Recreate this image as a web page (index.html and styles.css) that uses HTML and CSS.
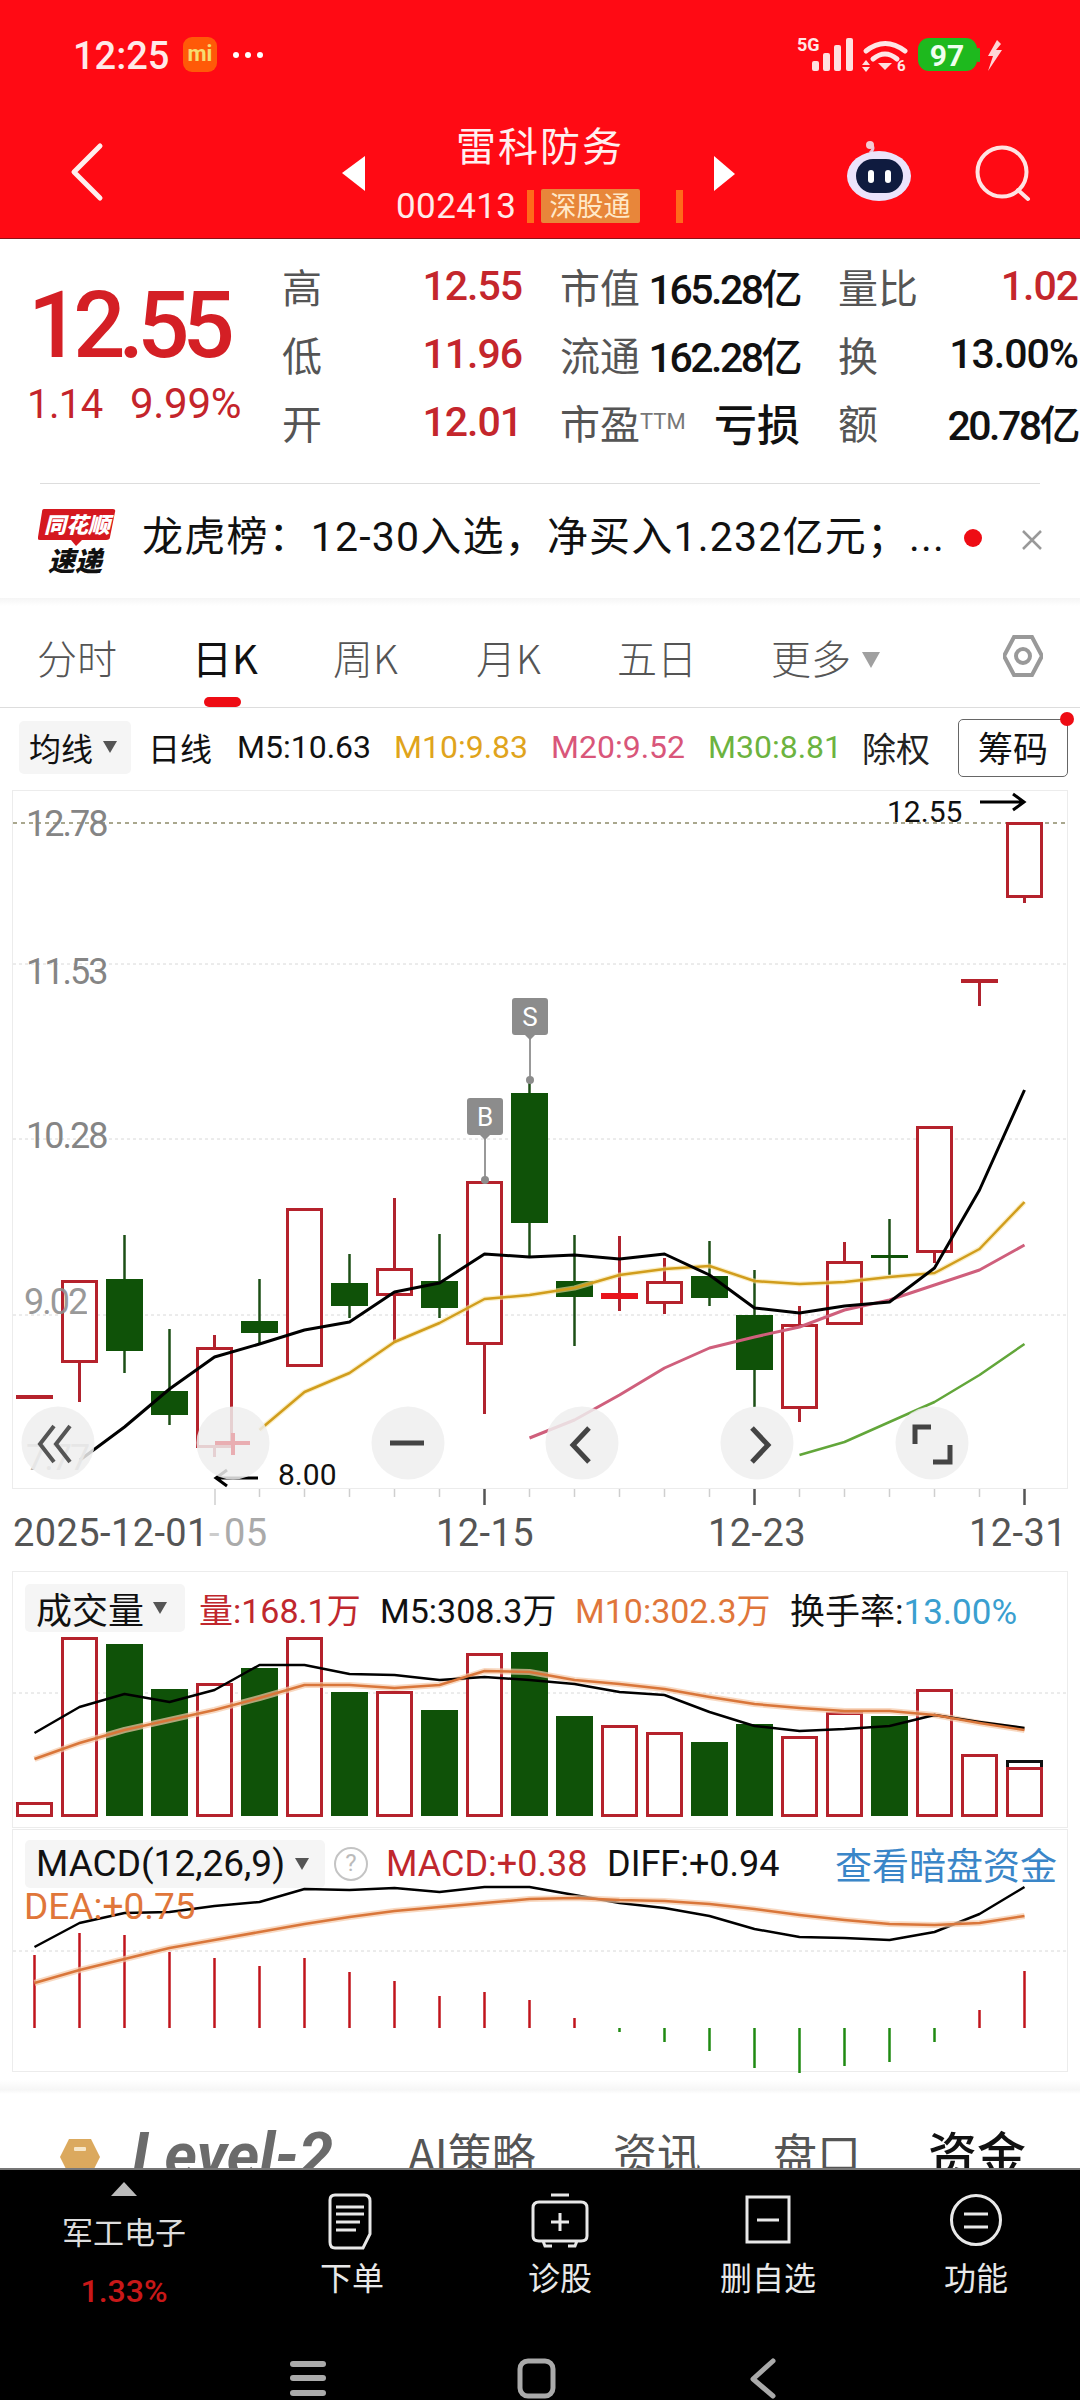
FILE: index.html
```html
<!DOCTYPE html>
<html lang="zh">
<head>
<meta charset="utf-8">
<title>雷科防务</title>
<link rel="stylesheet" href="styles.css">
</head>
<body>
<div class="screen">
  <header class="header">
    <svg class="header-art" viewBox="0 0 1080 238" width="1080" height="238">
      <text class="st-time" x="73" y="69">12:25</text>
      <rect class="mi-bg" x="183" y="37" width="34" height="35" rx="9"/>
      <text class="mi-text" x="200" y="61">mi</text>
      <circle class="wh" cx="236" cy="55" r="3"/><circle class="wh" cx="248" cy="55" r="3"/><circle class="wh" cx="260" cy="55" r="3"/>
      <text class="st-5g" x="797" y="51">5G</text>
      <g class="soft-wh">
        <rect x="812" y="61" width="7" height="10" rx="2"/><rect x="823" y="53" width="7" height="18" rx="2"/><rect x="834" y="45" width="7" height="26" rx="2"/><rect x="846" y="38" width="7" height="33" rx="2"/>
        <path d="M878 63 L892 63 L885 70 Z"/>
        <path d="M862 65 L866 60 L870 65 Z"/><path d="M862 67 L866 72 L870 67 Z"/>
      </g>
      <path class="wifi" d="M866 51 Q885 36 905 51"/>
      <path class="wifi" d="M873 59 Q885 49 897 59"/>
      <text class="st-6" x="897" y="71">6</text>
      <rect class="bat" x="918" y="38" width="59" height="33" rx="11"/>
      <rect class="bat" x="977" y="48" width="3" height="14" rx="1"/>
      <text class="bat-text" x="947" y="66">97</text>
      <path class="soft-wh-f" d="M997 40 L988 56 L993 56 L988 71 L1002 50 L996 50 L1001 44 Z"/>
      <path class="back" d="M100 146 L74 172 L100 198"/>
      <path class="wh" d="M365 156 L342 173 L365 191 Z"/>
      <path class="wh" d="M714 156 L735 174 L714 191 Z"/>
      <text class="title" x="540" y="161">雷科防务</text>
      <text class="code" x="396" y="218">002413</text>
      <rect class="tag-bar" x="527" y="190" width="7" height="33"/>
      <rect class="tag-bg" x="541" y="189" width="99" height="34" rx="2"/>
      <text class="tag-text" x="590" y="216">深股通</text>
      <rect class="tag-bar" x="676" y="190" width="7" height="33"/>
      <path class="ant" d="M870 153 Q876 147 870 145"/>
      <circle class="ant-dot" cx="870" cy="145" r="4"/>
      <ellipse class="bot-head" cx="879" cy="176" rx="32" ry="25"/>
      <rect class="bot-face" x="856" y="159" width="47" height="34" rx="17"/>
      <rect class="wh" x="868" y="170" width="6" height="13" rx="3"/><rect class="wh" x="885" y="170" width="6" height="13" rx="3"/>
      <circle class="search" cx="1002" cy="172" r="24.5"/>
      <path class="search" d="M1018 190 L1028 199"/>
    </svg>
  </header>

  <section class="quote">
    <div class="price">
      <div class="price-main">12.55</div>
      <div class="price-sub"><span class="sub-a">1.14</span><span class="sub-b">9.99%</span></div>
    </div>
    <div class="stats">
      <div class="cell"><span class="lbl">高</span><span class="val up-text">12.55</span></div>
      <div class="cell"><span class="lbl">市值</span><span class="val val-y">165.28亿</span></div>
      <div class="cell"><span class="lbl">量比</span><span class="val up-text">1.02</span></div>
      <div class="cell"><span class="lbl">低</span><span class="val up-text">11.96</span></div>
      <div class="cell"><span class="lbl">流通</span><span class="val val-y">162.28亿</span></div>
      <div class="cell"><span class="lbl">换</span><span class="val">13.00%</span></div>
      <div class="cell"><span class="lbl">开</span><span class="val up-text">12.01</span></div>
      <div class="cell"><span class="lbl">市盈<sup class="ttm">TTM</sup></span><span class="val val-cn">亏损</span></div>
      <div class="cell"><span class="lbl">额</span><span class="val val-y">20.78亿</span></div>
    </div>
  </section>

  <section class="notice">
    <svg class="logo" viewBox="38 506 78 66" width="78" height="66">
      <path class="logo-red" d="M44 507 L113 507 Q116 507 115 510 L110 535 Q110 538 106 538 L82 538 L76 544 L71 538 L40 538 Q37 538 38 535 L42 510 Q42 507 44 507 Z"/>
      <text class="logo-top" x="77" y="531">同花顺</text>
      <text class="logo-bot" x="75" y="569">速递</text>
    </svg>
    <div class="notice-text">龙虎榜：12-30入选，净买入1.232亿元；...</div>
    <span class="notice-dot"></span>
    <svg class="notice-x" viewBox="0 0 24 24" width="24" height="24"><path d="M3 3 L21 21 M21 3 L3 21"/></svg>
  </section>

  <nav class="tabs">
    <span class="tab">分时</span>
    <span class="tab active">日K</span>
    <span class="tab">周K</span>
    <span class="tab">月K</span>
    <span class="tab">五日</span>
    <span class="tab">更多<i class="caret-l"></i></span>
    <svg class="hex" viewBox="0 0 40 42" width="40" height="42"><path d="M11 2 H29 L39 21 L29 40 H11 L1 21 Z"/><circle cx="20" cy="21" r="7"/></svg>
  </nav>

  <div class="legend-main">
    <span class="pill pill-ma">均线<i class="caret"></i></span>
    <span class="lg lg-day">日线</span>
    <span class="lg lg-m5">M5:10.63</span>
    <span class="lg lg-m10">M10:9.83</span>
    <span class="lg lg-m20">M20:9.52</span>
    <span class="lg lg-m30">M30:8.81</span>
    <span class="lg lg-ex">除权</span>
    <span class="chips">筹码<i class="chips-dot"></i></span>
  </div>

  <svg class="chart" viewBox="0 790 1080 781" width="1080" height="781">
    <rect class="frame" x="12.5" y="790.5" width="1055" height="698"/>
    <line class="grid-strong" x1="13" y1="823" x2="1067" y2="823"/>
    <line class="grid" x1="13" y1="964" x2="1067" y2="964"/>
    <line class="grid" x1="13" y1="1139" x2="1067" y2="1139"/>
    <line class="grid" x1="13" y1="1315" x2="1067" y2="1315"/>

    <g class="dn-wick">
      <line x1="124.5" y1="1235" x2="124.5" y2="1373"/><line x1="169.5" y1="1329" x2="169.5" y2="1425"/><line x1="259.5" y1="1279" x2="259.5" y2="1344"/><line x1="349.5" y1="1254" x2="349.5" y2="1318"/><line x1="439.5" y1="1234" x2="439.5" y2="1318"/><line x1="529.5" y1="1080" x2="529.5" y2="1257"/><line x1="574.5" y1="1235" x2="574.5" y2="1346"/><line x1="709.5" y1="1241" x2="709.5" y2="1306"/><line x1="754.5" y1="1270" x2="754.5" y2="1407"/><line x1="889.5" y1="1219" x2="889.5" y2="1275"/>
    </g>
    <g class="up-wick">
      <line x1="79.5" y1="1362" x2="79.5" y2="1402"/><line x1="214.5" y1="1335" x2="214.5" y2="1457"/><line x1="394.5" y1="1198" x2="394.5" y2="1343"/><line x1="484.5" y1="1344" x2="484.5" y2="1414"/><line x1="619.5" y1="1236" x2="619.5" y2="1311"/><line x1="664.5" y1="1258" x2="664.5" y2="1314"/><line x1="799.5" y1="1306" x2="799.5" y2="1422"/><line x1="844.5" y1="1242" x2="844.5" y2="1261"/><line x1="934.5" y1="1252" x2="934.5" y2="1263"/><line x1="979.5" y1="980" x2="979.5" y2="1006"/><line x1="1024.5" y1="897" x2="1024.5" y2="903"/>
    </g>
    <g class="dn-body">
      <rect x="106" y="1279" width="37" height="72"/><rect x="151" y="1391" width="37" height="24"/><rect x="241" y="1321" width="37" height="12"/><rect x="331" y="1283" width="37" height="23"/><rect x="421" y="1281" width="37" height="27"/><rect x="511" y="1093" width="37" height="130"/><rect x="556" y="1281" width="37" height="16"/><rect x="691" y="1276" width="37" height="22"/><rect x="736" y="1315" width="37" height="55"/><rect x="871" y="1255" width="37" height="3"/>
    </g>
    <g class="up-body">
      <rect x="62.5" y="1281.5" width="34" height="80"/><rect x="197.5" y="1348.5" width="34" height="98"/><rect x="287.5" y="1209.5" width="34" height="156"/><rect x="377.5" y="1269.5" width="34" height="25"/><rect x="467.5" y="1182.5" width="34" height="161"/><rect x="647.5" y="1282.5" width="34" height="20"/><rect x="782.5" y="1325.5" width="34" height="82"/><rect x="827.5" y="1262.5" width="34" height="61"/><rect x="917.5" y="1127.5" width="34" height="124"/><rect x="1007.5" y="823.5" width="34" height="73"/>
    </g>
    <rect class="up-flat" x="16" y="1395" width="37" height="4"/>
    <rect class="up-bright" x="601" y="1293" width="37" height="6"/>
    <rect class="up-flat" x="961" y="979" width="37" height="4"/>

    <polyline class="halo-y" points="259.5,1430 304.5,1392 349.5,1373 394.5,1342 439.5,1323 484.5,1299 529.5,1295 574.5,1288 619.5,1275 664.5,1269 709.5,1266 754.5,1281 799.5,1284 844.5,1282 889.5,1277 934.5,1273 979.5,1249 1024.5,1202"/>
    <polyline class="ma10" points="259.5,1430 304.5,1392 349.5,1373 394.5,1342 439.5,1323 484.5,1299 529.5,1295 574.5,1288 619.5,1275 664.5,1269 709.5,1266 754.5,1281 799.5,1284 844.5,1282 889.5,1277 934.5,1273 979.5,1249 1024.5,1202"/>
    <polyline class="ma20" points="529.5,1438 574.5,1420 619.5,1395 664.5,1368 709.5,1348 754.5,1337 799.5,1327 844.5,1310 889.5,1300 934.5,1285 979.5,1270 1024.5,1245"/>
    <polyline class="ma30" points="799.5,1455 844.5,1442 889.5,1422 934.5,1402 979.5,1375 1024.5,1344"/>
    <polyline class="ma5" points="80,1460 124.5,1427 169.5,1389 214.5,1357 259.5,1344 304.5,1330 349.5,1322 394.5,1292 439.5,1283 484.5,1254 529.5,1257 574.5,1255 619.5,1259 664.5,1254 709.5,1275 754.5,1308 799.5,1313 844.5,1306 889.5,1302 934.5,1268 979.5,1190 1024.5,1090"/>

    <text class="axis-y" x="26" y="836">12.78</text>
    <text class="axis-y" x="26" y="984">11.53</text>
    <text class="axis-y" x="26" y="1148">10.28</text>
    <text class="axis-y axis-soft" x="24" y="1314">9.02</text>
    <text class="axis-y fade" x="26" y="1470">7.77</text>

    <line class="mark-line" x1="530" y1="1035" x2="530" y2="1080"/>
    <circle class="mark" cx="530" cy="1080" r="4"/>
    <path class="mark" d="M515 998 H545 Q548 998 548 1001 V1032 Q548 1035 545 1035 H535 L530 1040 L525 1035 H515 Q512 1035 512 1032 V1001 Q512 998 515 998 Z"/>
    <text class="mark-text" x="530" y="1026">S</text>
    <line class="mark-line" x1="485" y1="1135" x2="485" y2="1180"/>
    <circle class="mark" cx="485" cy="1180" r="4"/>
    <path class="mark" d="M470 1098 H500 Q503 1098 503 1101 V1132 Q503 1135 500 1135 H490 L485 1140 L480 1135 H470 Q467 1135 467 1132 V1101 Q467 1098 470 1098 Z"/>
    <text class="mark-text" x="485" y="1126">B</text>

    <text class="note" x="887" y="822">12.55</text>
    <path class="arrow" d="M980 802 H1024 M1013 794 L1024 802 L1013 810"/>
    <path class="arrow" d="M258 1478 H216 M227 1470 L216 1478 L227 1486"/>
    <text class="note" x="278" y="1485">8.00</text>

    <g class="ctl">
      <circle cx="58" cy="1443" r="36.5"/><circle cx="233" cy="1443" r="36.5"/><circle cx="408" cy="1443" r="36.5"/><circle cx="582" cy="1443" r="36.5"/><circle cx="757" cy="1443" r="36.5"/><circle cx="932" cy="1443" r="36.5"/>
    </g>
    <path class="ctl-icon ctl-thin" d="M54 1426 L40 1444 L54 1462 M70 1426 L56 1444 L70 1462"/>
    <path class="ctl-plus" d="M215 1443 H250 M233 1433 V1455"/>
    <path class="ctl-icon" d="M390 1443 H424"/>
    <path class="ctl-icon" d="M589 1428 L573 1445 L589 1462"/>
    <path class="ctl-icon" d="M752 1428 L768 1445 L752 1462"/>
    <path class="ctl-icon" d="M915 1444 V1427 H931 M950 1445 V1462 H933"/>

    <g class="tick">
      <line x1="215" y1="1489" x2="215" y2="1505"/><line x1="259.5" y1="1489" x2="259.5" y2="1497"/><line x1="304.5" y1="1489" x2="304.5" y2="1497"/><line x1="349.5" y1="1489" x2="349.5" y2="1497"/><line x1="394.5" y1="1489" x2="394.5" y2="1497"/><line x1="439.5" y1="1489" x2="439.5" y2="1497"/><line x1="529.5" y1="1489" x2="529.5" y2="1497"/><line x1="574.5" y1="1489" x2="574.5" y2="1497"/><line x1="619.5" y1="1489" x2="619.5" y2="1497"/><line x1="664.5" y1="1489" x2="664.5" y2="1497"/><line x1="709.5" y1="1489" x2="709.5" y2="1497"/><line x1="799.5" y1="1489" x2="799.5" y2="1497"/><line x1="844.5" y1="1489" x2="844.5" y2="1497"/><line x1="889.5" y1="1489" x2="889.5" y2="1497"/><line x1="934.5" y1="1489" x2="934.5" y2="1497"/><line x1="979.5" y1="1489" x2="979.5" y2="1497"/>
    </g>
    <g class="tick-long">
      <line x1="484.5" y1="1489" x2="484.5" y2="1505"/><line x1="754.5" y1="1489" x2="754.5" y2="1505"/><line x1="1024.5" y1="1489" x2="1024.5" y2="1505"/>
    </g>
    <text class="date" x="13" y="1546">2025-12-01</text>
    <text class="date date-fade" x="209" y="1546">-</text>
    <text class="date date-mid" x="224" y="1546">05</text>
    <text class="date date-c" x="485" y="1546">12-15</text>
    <text class="date date-c" x="757" y="1546">12-23</text>
    <text class="date date-r" x="1067" y="1546">12-31</text>
  </svg>

  <section class="panel panel-vol">
    <div class="legend-row">
      <span class="pill pill-vol">成交量<i class="caret"></i></span>
      <span class="lv lv-a">量:168.1万</span>
      <span class="lv lv-b">M5:308.3万</span>
      <span class="lv lv-c">M10:302.3万</span>
      <span class="lv lv-d">换手率:<em class="lv-blue">13.00%</em></span>
    </div>
    <svg class="sub" viewBox="0 1632 1080 195" width="1080" height="195">
      <line class="grid" x1="13" y1="1693" x2="1067" y2="1693"/>
      <g class="dn-body">
        <rect x="106" y="1644" width="37" height="172"/><rect x="151" y="1689" width="37" height="127"/><rect x="241" y="1668" width="37" height="148"/><rect x="331" y="1692" width="37" height="124"/><rect x="421" y="1710" width="37" height="106"/><rect x="511" y="1652" width="37" height="164"/><rect x="556" y="1716" width="37" height="100"/><rect x="691" y="1742" width="37" height="74"/><rect x="736" y="1724" width="37" height="92"/><rect x="871" y="1716" width="37" height="100"/>
      </g>
      <g class="up-body">
        <rect x="17.5" y="1803.5" width="34" height="12"/><rect x="62.5" y="1638.5" width="34" height="177"/><rect x="197.5" y="1684.5" width="34" height="131"/><rect x="287.5" y="1638.5" width="34" height="177"/><rect x="377.5" y="1692.5" width="34" height="123"/><rect x="467.5" y="1654.5" width="34" height="161"/><rect x="602.5" y="1726.5" width="34" height="89"/><rect x="647.5" y="1733.5" width="34" height="82"/><rect x="782.5" y="1737.5" width="34" height="78"/><rect x="827.5" y="1713.5" width="34" height="102"/><rect x="917.5" y="1690.5" width="34" height="125"/><rect x="962.5" y="1755.5" width="34" height="60"/>
      </g>
      <rect class="black-box" x="1007.5" y="1761.5" width="34" height="8"/>
      <rect class="up-body-last" x="1007.5" y="1768.5" width="34" height="47"/>
      <polyline class="halo-o" points="34.5,1759 79.5,1743 124.5,1730 169.5,1720 214.5,1710 259.5,1698 304.5,1685 349.5,1685 394.5,1688 439.5,1685 484.5,1671 529.5,1672 574.5,1680 619.5,1684 664.5,1689 709.5,1697 754.5,1704 799.5,1708 844.5,1711 889.5,1711 934.5,1715 979.5,1723 1024.5,1730"/>
      <polyline class="line-k" points="34.5,1733 79.5,1707 124.5,1694 169.5,1702 214.5,1690 259.5,1665 304.5,1665 349.5,1674 394.5,1675 439.5,1680 484.5,1677 529.5,1680 574.5,1684 619.5,1692 664.5,1695 709.5,1712 754.5,1726 799.5,1731 844.5,1729 889.5,1726 934.5,1715 979.5,1722 1024.5,1728"/>
      <polyline class="line-o" points="34.5,1759 79.5,1743 124.5,1730 169.5,1720 214.5,1710 259.5,1698 304.5,1685 349.5,1685 394.5,1688 439.5,1685 484.5,1671 529.5,1672 574.5,1680 619.5,1684 664.5,1689 709.5,1697 754.5,1704 799.5,1708 844.5,1711 889.5,1711 934.5,1715 979.5,1723 1024.5,1730"/>
    </svg>
  </section>

  <section class="panel panel-macd">
    <div class="legend-row legend-macd">
      <span class="pill pill-macd">MACD(12,26,9)<i class="caret"></i></span>
      <span class="help">?</span>
      <span class="lm lm-a">MACD:+0.38</span>
      <span class="lm lm-b">DIFF:+0.94</span>
      <span class="lm lm-c">查看暗盘资金</span>
    </div>
    <svg class="sub" viewBox="0 1885 1080 186" width="1080" height="186">
      <line class="grid" x1="13" y1="1951" x2="1067" y2="1951"/>
      <g class="hist-up">
        <line x1="34.5" y1="1955" x2="34.5" y2="2028"/><line x1="79.5" y1="1933" x2="79.5" y2="2028"/><line x1="124.5" y1="1935" x2="124.5" y2="2028"/><line x1="169.5" y1="1952" x2="169.5" y2="2028"/><line x1="214.5" y1="1958" x2="214.5" y2="2028"/><line x1="259.5" y1="1966" x2="259.5" y2="2028"/><line x1="304.5" y1="1958" x2="304.5" y2="2028"/><line x1="349.5" y1="1972" x2="349.5" y2="2028"/><line x1="394.5" y1="1981" x2="394.5" y2="2028"/><line x1="439.5" y1="1996" x2="439.5" y2="2028"/><line x1="484.5" y1="1992" x2="484.5" y2="2028"/><line x1="529.5" y1="2000" x2="529.5" y2="2028"/><line x1="574.5" y1="2018" x2="574.5" y2="2028"/><line x1="979.5" y1="2010" x2="979.5" y2="2028"/><line x1="1024.5" y1="1971" x2="1024.5" y2="2028"/>
      </g>
      <g class="hist-dn">
        <line x1="619.5" y1="2028" x2="619.5" y2="2032"/><line x1="664.5" y1="2028" x2="664.5" y2="2042"/><line x1="709.5" y1="2028" x2="709.5" y2="2051"/><line x1="754.5" y1="2028" x2="754.5" y2="2068"/><line x1="799.5" y1="2028" x2="799.5" y2="2073"/><line x1="844.5" y1="2028" x2="844.5" y2="2066"/><line x1="889.5" y1="2028" x2="889.5" y2="2062"/><line x1="934.5" y1="2028" x2="934.5" y2="2042"/>
      </g>
      <polyline class="line-k" points="34.5,1947 79.5,1923 124.5,1913 169.5,1912 214.5,1906 259.5,1902 304.5,1889 349.5,1890 394.5,1888 439.5,1892 484.5,1887 529.5,1887 574.5,1895 619.5,1903 664.5,1908 709.5,1916 754.5,1929 799.5,1937 844.5,1938 889.5,1940 934.5,1932 979.5,1914 1024.5,1887"/>
      <polyline class="halo-o" points="34.5,1983 79.5,1970 124.5,1959 169.5,1948 214.5,1940 259.5,1932 304.5,1924 349.5,1917 394.5,1911 439.5,1907 484.5,1903 529.5,1899 574.5,1898 619.5,1900 664.5,1901 709.5,1904 754.5,1909 799.5,1915 844.5,1920 889.5,1924 934.5,1925 979.5,1923 1024.5,1916"/>
      <polyline class="line-o" points="34.5,1983 79.5,1970 124.5,1959 169.5,1948 214.5,1940 259.5,1932 304.5,1924 349.5,1917 394.5,1911 439.5,1907 484.5,1903 529.5,1899 574.5,1898 619.5,1900 664.5,1901 709.5,1904 754.5,1909 799.5,1915 844.5,1920 889.5,1924 934.5,1925 979.5,1923 1024.5,1916"/>
      <text class="dea" x="24" y="1919">DEA:+0.75</text>
    </svg>
  </section>

  <div class="fade-band"></div>

  <section class="peek">
    <svg class="gem" viewBox="0 0 42 48" width="42" height="48"><path class="gem-f" d="M10 2 H32 L41 20 L32 38 L21 46 L10 38 L1 20 Z"/><rect class="gem-b" x="15" y="10" width="12" height="4" rx="1"/></svg>
    <span class="pk-level">Level-2</span>
    <span class="pk">AI策略</span>
    <span class="pk">资讯</span>
    <span class="pk">盘口</span>
    <span class="pk pk-on">资金</span>
  </section>

  <footer class="bar">
    <div class="tools">
      <div class="tool-sector">
        <i class="tri"></i>
        <span class="sec-name">军工电子</span>
        <span class="sec-pct">1.33%</span>
      </div>
      <div class="tool">
        <svg class="ti" viewBox="0 0 60 58" width="60" height="58"><path d="M13 3 H42 Q48 3 48 9 V42 L41 56 H13 Q8 56 8 50 V8 Q8 3 13 3 Z"/><path d="M14 15 H42 M14 22 H42 M14 30 H38 M14 38 H34"/></svg>
        <span class="tool-l">下单</span>
      </div>
      <div class="tool">
        <svg class="ti" viewBox="0 0 60 58" width="60" height="58"><path d="M21 3 H39 M9 10 H51 Q57 10 57 16 V44 Q57 49 51 49 H9 Q3 49 3 44 V16 Q3 10 9 10 Z M13 49 L15 54 H22 M47 49 L45 54 H38 M30 21 V39 M21 30 H39"/></svg>
        <span class="tool-l">诊股</span>
      </div>
      <div class="tool">
        <svg class="ti ti-sq" viewBox="0 0 60 58" width="60" height="58"><path d="M9 5 H51 V50 H9 Z M19 28 H41"/></svg>
        <span class="tool-l">删自选</span>
      </div>
      <div class="tool">
        <svg class="ti" viewBox="0 0 60 58" width="60" height="58"><circle cx="30" cy="28" r="24.5"/><path d="M18 22 H42 M18 35 H42"/></svg>
        <span class="tool-l">功能</span>
      </div>
    </div>
    <svg class="navbar" viewBox="0 2355 1080 45" width="1080" height="45">
      <rect class="nv-f" x="290" y="2361" width="36" height="6" rx="3"/><rect class="nv-f" x="290" y="2375" width="36" height="6" rx="3"/><rect class="nv-f" x="290" y="2390" width="36" height="6" rx="3"/>
      <rect class="nv-s" x="520" y="2361" width="33" height="35" rx="8"/>
      <path class="nv-s" d="M773 2361 L753 2379 L773 2396"/>
    </svg>
  </footer>
</div>
</body>
</html>
```

FILE: styles.css
```css
* { box-sizing: border-box; margin: 0; padding: 0; }
html, body { background: #fff; }
body { width: 1080px; height: 2400px; overflow: hidden; font-family: "Noto Sans CJK SC", Roboto, sans-serif; }
.screen { width: 1080px; height: 2400px; overflow: hidden; display: flex; flex-direction: column; background: #fff; }
text { font-family: Roboto, "Noto Sans CJK SC", sans-serif; }
i { font-style: normal; }
em { font-style: normal; }

/* header */
.header { height: 239px; background: #ff0a14; border-bottom: 1px solid #8c1218; flex: none; }
.header-art { display: block; }
.st-time { font-size: 38px; font-weight: 500; fill: #ffe9e9; }
.mi-bg { fill: #ff5a08; }
.mi-text { font-size: 22px; font-weight: 700; fill: #f6dc70; text-anchor: middle; }
.wh { fill: #fff; }
.soft-wh rect, .soft-wh path { fill: #ffe0e0; }
.soft-wh-f { fill: #ffd6d6; }
.st-5g { font-size: 18px; font-weight: 700; fill: #ffe6e6; }
.st-6 { font-size: 15px; font-weight: 700; fill: #ffe6e6; }
.wifi { fill: none; stroke: #ffe6e6; stroke-width: 5; stroke-linecap: round; }
.bat { fill: #1eb91e; }
.bat-text { font-size: 30px; font-weight: 700; fill: #f0fff0; text-anchor: middle; }
.back { fill: none; stroke: #ffeeee; stroke-width: 5; stroke-linecap: round; stroke-linejoin: round; }
.title { font-family: "Noto Sans CJK SC", sans-serif; font-size: 40px; fill: #fff0f0; text-anchor: middle; letter-spacing: 2px; }
.code { font-size: 35px; fill: #ffeaea; letter-spacing: .4px; }
.tag-bar { fill: #ff6a1a; }
.tag-bg { fill: #e8863a; }
.tag-text { font-family: "Noto Sans CJK SC", sans-serif; font-size: 27px; fill: #ffe9c9; text-anchor: middle; }
.ant { fill: none; stroke: #e9c4d8; stroke-width: 3; }
.ant-dot { fill: #f4cad4; }
.bot-head { fill: #ebe3fb; }
.bot-face { fill: #0f1b3f; }
.search { fill: none; stroke: #ffe3e3; stroke-width: 4; stroke-linecap: round; }

/* quote */
.quote { height: 244px; flex: none; display: flex; position: relative; }
.price { width: 282px; flex: none; color: #d41f25; }
.price-main { font-family: Roboto, sans-serif; font-weight: 500; font-size: 92px; line-height: 92px; letter-spacing: -7px; margin: 41px 0 0 28px; }
.price-sub { font-family: Roboto, sans-serif; line-height: 48px; margin: 8px 0 0 27px; display: flex; align-items: baseline; color: #c4242b; }
.sub-a { font-size: 40px; letter-spacing: -.6px; width: 103px; }
.sub-b { font-size: 42px; letter-spacing: -.3px; }
.stats { display: grid; grid-template-columns: repeat(3, 240px); column-gap: 38px; grid-auto-rows: 68px; padding-top: 13px; }
.cell { display: flex; justify-content: space-between; align-items: center; }
.lbl { font-size: 40px; line-height: 68px; color: #555; white-space: nowrap; }
.ttm { font-family: Roboto, sans-serif; font-size: 22px; vertical-align: 10px; line-height: 0; color: #777; }
.val { font-family: Roboto, "Noto Sans CJK SC", sans-serif; font-size: 41px; font-weight: 500; letter-spacing: -1px; color: #111; white-space: nowrap; }
.val-y { letter-spacing: -2.5px; }
.val-cn { font-size: 43px; letter-spacing: 0; }
.up-text { color: #c4262c; }

/* notice */
.notice { height: 115px; flex: none; display: flex; align-items: center; position: relative; padding-left: 38px; background: linear-gradient(#ddd,#ddd) 40px 0/1000px 1px no-repeat; }
.logo { flex: none; margin-top: 1px; }
.logo-red { fill: #d5181f; }
.logo-top { font-family: "Noto Sans CJK SC", sans-serif; font-size: 22px; font-weight: 900; font-style: italic; fill: #fff; text-anchor: middle; }
.logo-bot { font-family: "Noto Sans CJK SC", sans-serif; font-size: 27px; font-weight: 900; font-style: italic; fill: #111; text-anchor: middle; }
.notice-text { font-family: Roboto, "Noto Sans CJK SC", sans-serif; font-size: 41px; line-height: 56px; color: #111; margin: 0 0 8px 26px; width: 810px; white-space: nowrap; letter-spacing: 1.2px; }
.notice-dot { position: absolute; left: 964px; top: 46px; width: 18px; height: 18px; border-radius: 50%; background: #ee0c14; }
.notice-x { position: absolute; left: 1020px; top: 45px; fill: none; stroke: #999; stroke-width: 2.5; }

/* tabs */
.tabs { height: 110px; flex: none; display: grid; grid-template-columns: 155px 141px 143px 141px 154px 1fr; align-items: center; border-bottom: 1px solid #ddd; background: linear-gradient(#f5f5f5, #fff) 0 0/100% 8px no-repeat; position: relative; padding: 8px 0 0 37px; }
.tab { font-size: 40px; color: #555; white-space: nowrap; font-weight: 300; }
.active { color: #111; font-weight: 400; }
.active::after { content: ""; position: absolute; left: 204px; bottom: 0; width: 37px; height: 10px; border-radius: 5px; background: #ee0c14; }
.caret-l { display: inline-block; width: 0; height: 0; border-left: 9px solid transparent; border-right: 9px solid transparent; border-top: 16px solid #a0a0a0; margin-left: 11px; vertical-align: 6px; }
.hex { position: absolute; left: 1003px; top: 37px; fill: none; stroke: #999; stroke-width: 4; }

/* main legend */
.legend-main { height: 82px; flex: none; position: relative; display: flex; align-items: center; padding-left: 19px; padding-bottom: 4px; white-space: nowrap; }
.pill { background: #f5f5f5; border-radius: 5px; display: flex; align-items: center; color: #111; white-space: nowrap; flex: none; }
.caret { display: inline-block; width: 0; height: 0; border-left: 7px solid transparent; border-right: 7px solid transparent; border-top: 12px solid #555; }
.pill-ma { width: 112px; height: 53px; padding-left: 10px; font-size: 32px; }
.pill-ma .caret { margin-left: 10px; }
.lg { font-family: Roboto, "Noto Sans CJK SC", sans-serif; font-size: 32px; color: #111; flex: none; }
.lg-day { margin-left: 17px; width: 89px; }
.lg-m5 { width: 157px; }
.lg-m10 { width: 157px; color: #e0a41c; }
.lg-m20 { width: 157px; color: #d9567a; }
.lg-m30 { width: 154px; color: #6cb33f; }
.lg-ex { font-size: 34px; color: #222; }
.chips { position: absolute; left: 958px; top: 11px; width: 110px; height: 58px; border: 1.5px solid #666; border-radius: 5px; text-align: center; line-height: 54px; font-size: 35px; color: #111; }
.chips-dot { position: absolute; right: -7px; top: -8px; width: 14px; height: 14px; border-radius: 50%; background: #ee0c14; }

/* main chart */
.chart { display: block; flex: none; overflow: visible; }
.frame { fill: none; stroke: #ececec; stroke-width: 1; }
.grid { stroke: #d8d8d8; stroke-width: 1; stroke-dasharray: 3 3; }
.grid-strong { stroke: #8d8a6a; stroke-width: 1.5; stroke-dasharray: 4 4; }
.axis-y { font-size: 36px; fill: #858585; letter-spacing: -2px; }
.axis-soft { fill: #8f8f8f; opacity: .9; }
.fade { fill: #b5b5b5; }
.dn-wick line { stroke: #1c4f16; stroke-width: 2.5; }
.up-wick line { stroke: #b0232e; stroke-width: 3; }
.dn-body rect { fill: #0f5208; }
.up-body rect { fill: #fff; stroke: #b5222c; stroke-width: 3; }
.up-flat { fill: #b5222c; }
.up-bright { fill: #e8141c; }
.ma5 { fill: none; stroke: #000; stroke-width: 3; stroke-linejoin: round; }
.ma10 { fill: none; stroke: #d19d1c; stroke-width: 2.5; stroke-linejoin: round; }
.halo-y { fill: none; stroke: #f7e2a0; stroke-width: 5; stroke-linejoin: round; opacity: .6; }
.ma20 { fill: none; stroke: #cf5f7c; stroke-width: 3; stroke-linejoin: round; }
.ma30 { fill: none; stroke: #62a63a; stroke-width: 2.5; stroke-linejoin: round; }
.mark { fill: #8c8c8c; }
.mark-line { stroke: #777; stroke-width: 1.5; }
.mark-text { font-size: 26px; fill: #fff; text-anchor: middle; font-family: Roboto, sans-serif; }
.note { font-size: 30px; fill: #111; }
.arrow { fill: none; stroke: #000; stroke-width: 3; }
.ctl circle { fill: #eeeeee; opacity: .85; }
.ctl-icon { fill: none; stroke: #444; stroke-width: 5; }
.ctl-thin { stroke: #555; stroke-width: 4; }
.ctl-plus { fill: none; stroke: #e9aeb2; stroke-width: 4; }
.tick line { stroke: #cfcfcf; stroke-width: 1.5; }
.tick-long line { stroke: #555; stroke-width: 2.5; }
.date { font-size: 38px; fill: #555; letter-spacing: .4px; }
.date-fade { fill: #ccc; }
.date-mid { fill: #aaa; }
.date-c { text-anchor: middle; }
.date-r { text-anchor: end; }

/* panels */
.panel { margin: 0 12px; border: 1px solid #ececec; flex: none; }
.panel-vol { height: 257px; }
.panel-macd { height: 243px; margin-top: 1px; }
.legend-row { height: 60px; display: flex; align-items: center; padding: 12px 0 0 12px; white-space: nowrap; }
.legend-macd { height: 55px; }
.pill-vol { width: 160px; height: 48px; padding-left: 11px; font-size: 36px; }
.pill-vol .caret { margin-left: 9px; }
.pill-macd { width: 300px; height: 48px; padding-left: 11px; font-size: 37px; font-family: Roboto, sans-serif; }
.pill-macd .caret { margin-left: 10px; }
.lv { font-family: Roboto, "Noto Sans CJK SC", sans-serif; font-size: 34px; flex: none; }
.lv-a { width: 181px; margin-left: 14px; color: #c0272d; }
.lv-b { width: 195px; color: #111; }
.lv-c { width: 215px; color: #e0763a; }
.lv-d { color: #111; font-size: 35px; }
.lv-blue { color: #3a9fd0; }
.sub { display: block; overflow: visible; margin-left: -13px; }
.help { width: 34px; height: 34px; border: 2.5px solid #c4c4c4; border-radius: 50%; margin-left: 9px; text-align: center; font-size: 24px; line-height: 29px; color: #bbb; flex: none; font-family: Roboto, sans-serif; }
.lm { font-family: Roboto, "Noto Sans CJK SC", sans-serif; font-size: 36px; flex: none; }
.lm-a { margin-left: 18px; width: 221px; color: #c0272d; }
.lm-b { width: 228px; color: #111; }
.lm-c { color: #3a86c8; font-size: 37px; }
.black-box { fill: #fff; stroke: #111; stroke-width: 3; }
.up-body-last { fill: #fff; stroke: #b5222c; stroke-width: 3; }
.line-k { fill: none; stroke: #000; stroke-width: 2.5; stroke-linejoin: round; }
.line-o { fill: none; stroke: #d9763a; stroke-width: 2.5; stroke-linejoin: round; }
.halo-o { fill: none; stroke: #f5c9a8; stroke-width: 6; stroke-linejoin: round; opacity: .7; }
.hist-up line { stroke: #c0141c; stroke-width: 2.5; }
.hist-dn line { stroke: #1f8a12; stroke-width: 2.5; }
.dea { font-size: 37px; fill: #e0763a; }

.fade-band { height: 14px; flex: none; background: linear-gradient(#fff, #f6f6f6 70%, #fff); margin-top: 8px; }

/* peek tabs */
.peek { height: 74px; flex: none; overflow: hidden; display: grid; grid-template-columns: 73px 276px 205px 160px 155px 1fr; padding: 28px 0 0 59px; align-items: start; }
.gem { display: block; margin-top: 15px; }
.gem-f { fill: #dba95e; }
.gem-b { fill: #f6e6c8; }
.pk-level { font-family: Roboto, sans-serif; font-size: 62px; line-height: 60px; font-weight: 700; font-style: italic; color: #6b6b6b; white-space: nowrap; margin-top: 4px; }
.pk { font-size: 44px; line-height: 56px; color: #555; white-space: nowrap; margin-top: 2px; }
.pk-on { font-size: 49px; color: #111; font-weight: 500; }

/* bottom bar */
.bar { flex: none; height: 232px; background: #000; border-top: 2px solid #777; display: flex; flex-direction: column; }
.tools { height: 185px; display: grid; grid-template-columns: 248px repeat(4, 208px); }
.tool-sector { display: flex; flex-direction: column; align-items: center; padding-top: 12px; }
.tri { width: 0; height: 0; border-left: 13px solid transparent; border-right: 13px solid transparent; border-bottom: 14px solid #bbb; }
.sec-name { font-size: 31px; line-height: 40px; color: #ddd; margin-top: 15px; }
.sec-pct { font-family: Roboto, sans-serif; font-size: 32px; font-weight: 500; line-height: 40px; color: #c81818; margin-top: 20px; }
.tool { display: flex; flex-direction: column; align-items: center; padding-top: 22px; }
.ti { display: block; fill: none; stroke: #e8e8e8; stroke-width: 3; }
.tool-l { font-size: 32px; line-height: 44px; color: #e8e8e8; margin-top: 4px; white-space: nowrap; }
.navbar { display: block; flex: none; }
.nv-f { fill: #aaa; }
.nv-s { fill: none; stroke: #aaa; stroke-width: 5; stroke-linecap: round; stroke-linejoin: round; }
```
